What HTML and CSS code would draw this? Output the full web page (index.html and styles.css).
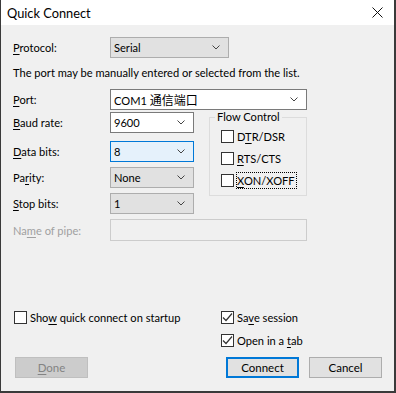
FILE: index.html
```html
<!DOCTYPE html>
<html lang="en">
<head>
    <meta charset="UTF-8">
    <title>Quick Connect</title>
    <link rel="stylesheet" href="styles.css">
</head>
<body>
    <div class="window">
        <!-- Title bar -->
        <div class="titlebar">
            <span class="title">Quick Connect</span>
            <svg class="close" width="11" height="11" viewBox="0 0 11 11">
                <path d="M0.5 0.5L10.5 10.5M10.5 0.5L0.5 10.5" stroke="#111" stroke-width="1" fill="none"/>
            </svg>
        </div>

        <div class="content">
            <!-- Protocol -->
            <div class="row">
                <label class="lbl"><u>P</u>rotocol:</label>
                <div class="combo gray w-protocol">
                    <span>Serial</span>
                    <svg class="chev" width="8" height="5" viewBox="0 0 8 5"><path d="M0.5 0.5L4 4L7.5 0.5" stroke="#444" fill="none"/></svg>
                </div>
            </div>

            <p class="note">The port may be manually entered or selected from the list.</p>

            <!-- Port -->
            <div class="row row-port">
                <label class="lbl"><u>P</u>ort:</label>
                <div class="combo white w-wide">
                    <span>COM1 <span class="cjk">通信端口</span></span>
                    <svg class="chev" width="8" height="5" viewBox="0 0 8 5"><path d="M0.5 0.5L4 4L7.5 0.5" stroke="#444" fill="none"/></svg>
                </div>
            </div>

            <div class="mid">
                <div class="fields">
                    <div class="row row-baud">
                        <label class="lbl"><u>B</u>aud rate:</label>
                        <div class="combo white w-small">
                            <span>9600</span>
                            <svg class="chev" width="8" height="5" viewBox="0 0 8 5"><path d="M0.5 0.5L4 4L7.5 0.5" stroke="#444" fill="none"/></svg>
                        </div>
                    </div>
                    <div class="row row-data">
                        <label class="lbl"><u>D</u>ata bits:</label>
                        <div class="combo focused w-small">
                            <span>8</span>
                            <svg class="chev" width="8" height="5" viewBox="0 0 8 5"><path d="M0.5 0.5L4 4L7.5 0.5" stroke="#444" fill="none"/></svg>
                        </div>
                    </div>
                    <div class="row row-next">
                        <label class="lbl">Pa<u>r</u>ity:</label>
                        <div class="combo gray w-small">
                            <span>None</span>
                            <svg class="chev" width="8" height="5" viewBox="0 0 8 5"><path d="M0.5 0.5L4 4L7.5 0.5" stroke="#444" fill="none"/></svg>
                        </div>
                    </div>
                    <div class="row row-next">
                        <label class="lbl"><u>S</u>top bits:</label>
                        <div class="combo gray w-small">
                            <span>1</span>
                            <svg class="chev" width="8" height="5" viewBox="0 0 8 5"><path d="M0.5 0.5L4 4L7.5 0.5" stroke="#444" fill="none"/></svg>
                        </div>
                    </div>
                </div>

                <!-- Flow control group -->
                <fieldset class="flow">
                    <legend>Flow Control</legend>
                    <div class="check first">
                        <span class="box"></span>
                        <span>D<u>T</u>R/DSR</span>
                    </div>
                    <div class="check">
                        <span class="box"></span>
                        <span><u>R</u>TS/CTS</span>
                    </div>
                    <div class="check">
                        <span class="box"></span>
                        <span class="focus"><u>X</u>ON/XOFF</span>
                    </div>
                </fieldset>
            </div>

            <!-- Name of pipe (disabled) -->
            <div class="row row-pipe">
                <label class="lbl disabled">Na<u>m</u>e of pipe:</label>
                <div class="textbox-disabled w-wide"></div>
            </div>

            <!-- Options -->
            <div class="options">
                <div class="opt-left">
                    <div class="check">
                        <span class="box"></span>
                        <span>Sho<u>w</u> quick connect on startup</span>
                    </div>
                </div>
                <div class="opt-right">
                    <div class="check">
                        <span class="box checked">
                            <svg width="11" height="11" viewBox="0 0 11 11"><path d="M1 5.5L4 8.5L10 1.5" stroke="#333" stroke-width="1.2" fill="none"/></svg>
                        </span>
                        <span>Sa<u>v</u>e session</span>
                    </div>
                    <div class="check">
                        <span class="box checked">
                            <svg width="11" height="11" viewBox="0 0 11 11"><path d="M1 5.5L4 8.5L10 1.5" stroke="#333" stroke-width="1.2" fill="none"/></svg>
                        </span>
                        <span>Open in a <u>t</u>ab</span>
                    </div>
                </div>
            </div>

            <!-- Buttons -->
            <div class="buttons">
                <button class="btn btn-disabled"><u>D</u>one</button>
                <span class="spacer"></span>
                <button class="btn btn-default">Connect</button>
                <button class="btn">Cancel</button>
            </div>
        </div>
    </div>
</body>
</html>
```

FILE: styles.css
```css
/* General */
body {
    margin: 0;
    font-family: Lato, "Noto Sans CJK SC", sans-serif;
    font-size: 11.1px;
    color: #000;
    background: #fff;
}

u {
    text-decoration: underline;
    text-underline-offset: 2px;
}

.cjk {
    font-size: 12px;
}

/* Window frame */
.window {
    width: 396px;
    height: 393px;
    box-sizing: border-box;
    border-left: 1px solid #3a3a3a;
    border-right: 2px solid #3a3a3a;
    border-bottom: 2px solid #3a3a3a;
    background: #f0f0f0;
    display: flex;
    flex-direction: column;
}

/* Title bar */
.titlebar {
    height: 25px;
    flex: none;
    background: #fff;
    display: flex;
    align-items: center;
    justify-content: space-between;
    padding: 0 11px 0 6px;
}

.title {
    font-size: 12.8px;
}

.close {
    display: block;
}

/* Content */
.content {
    flex: 1;
    display: flex;
    flex-direction: column;
    padding: 12px 12px 13px 12px;
}

.row {
    display: flex;
    align-items: center;
    height: 21px;
}

.lbl {
    width: 97px;
    flex: none;
}

.lbl.disabled {
    color: #a0a0a0;
}

.note {
    margin: 7px 0 0;
    line-height: 16px;
}

.row-port {
    margin-top: 8px;
}

.row-baud {
    margin-top: 2px;
}

.row-data {
    margin-top: 8px;
}

.row-next {
    margin-top: 5px;
}

.row-pipe {
    margin-top: 5px;
    height: 22px;
}

/* Combo boxes */
.combo {
    box-sizing: border-box;
    height: 21px;
    border: 1px solid #adadad;
    display: flex;
    align-items: center;
    justify-content: space-between;
    padding: 0 8px 0 3px;
}

.combo.gray {
    background: #e1e1e1;
}

.combo.white {
    background: #fff;
    border-color: #7a7a7a;
}

.combo.focused {
    background: #e5f1fb;
    border-color: #0078d7;
}

.chev {
    display: block;
}

.w-protocol {
    width: 119px;
}

.w-wide {
    width: 197px;
}

.w-small {
    width: 84px;
}

.textbox-disabled {
    box-sizing: border-box;
    height: 22px;
    border: 1px solid #cccccc;
    background: #f0f0f0;
}

/* Middle section */
.mid {
    display: flex;
    align-items: flex-start;
}

.fields {
    width: 181px;
}

/* Flow control group */
.flow {
    margin: 0 0 0 15px;
    width: 98px;
    min-inline-size: 0;
    box-sizing: border-box;
    border: 1px solid #dcdcdc;
    padding: 0 0 7px 0;
}

.flow legend {
    margin-left: 5px;
    padding: 0 2px;
    line-height: 14px;
}

.flow .check {
    margin: 6px 0 0 11px;
}

.flow .check.first {
    margin-top: 4px;
}

/* Checkboxes */
.check {
    display: flex;
    align-items: center;
    gap: 3px;
    height: 16px;
}

.box {
    box-sizing: border-box;
    width: 13px;
    height: 13px;
    border: 1px solid #333;
    background: #fff;
    display: flex;
    align-items: center;
    justify-content: center;
    flex: none;
}

.focus {
    outline: 1px dotted #000;
    padding: 0 1px 0 0;
    line-height: 15px;
}

/* Bottom options */
.options {
    margin-top: auto;
    display: flex;
    padding-left: 1px;
}

.opt-left {
    width: 207px;
}

.opt-right {
    display: flex;
    flex-direction: column;
    gap: 7px;
}

/* Buttons */
.buttons {
    display: flex;
    margin-top: 9px;
    padding-left: 2px;
    gap: 10px;
}

.spacer {
    flex: 1;
}

.btn {
    box-sizing: border-box;
    width: 73px;
    height: 21px;
    padding: 0;
    font-family: inherit;
    font-size: 11.5px;
    color: #000;
    background: #e1e1e1;
    border: 1px solid #adadad;
}

.btn-default {
    border: 2px solid #0078d7;
}

.btn-disabled {
    background: #cccccc;
    border-color: #bfbfbf;
    color: #838383;
}
```
